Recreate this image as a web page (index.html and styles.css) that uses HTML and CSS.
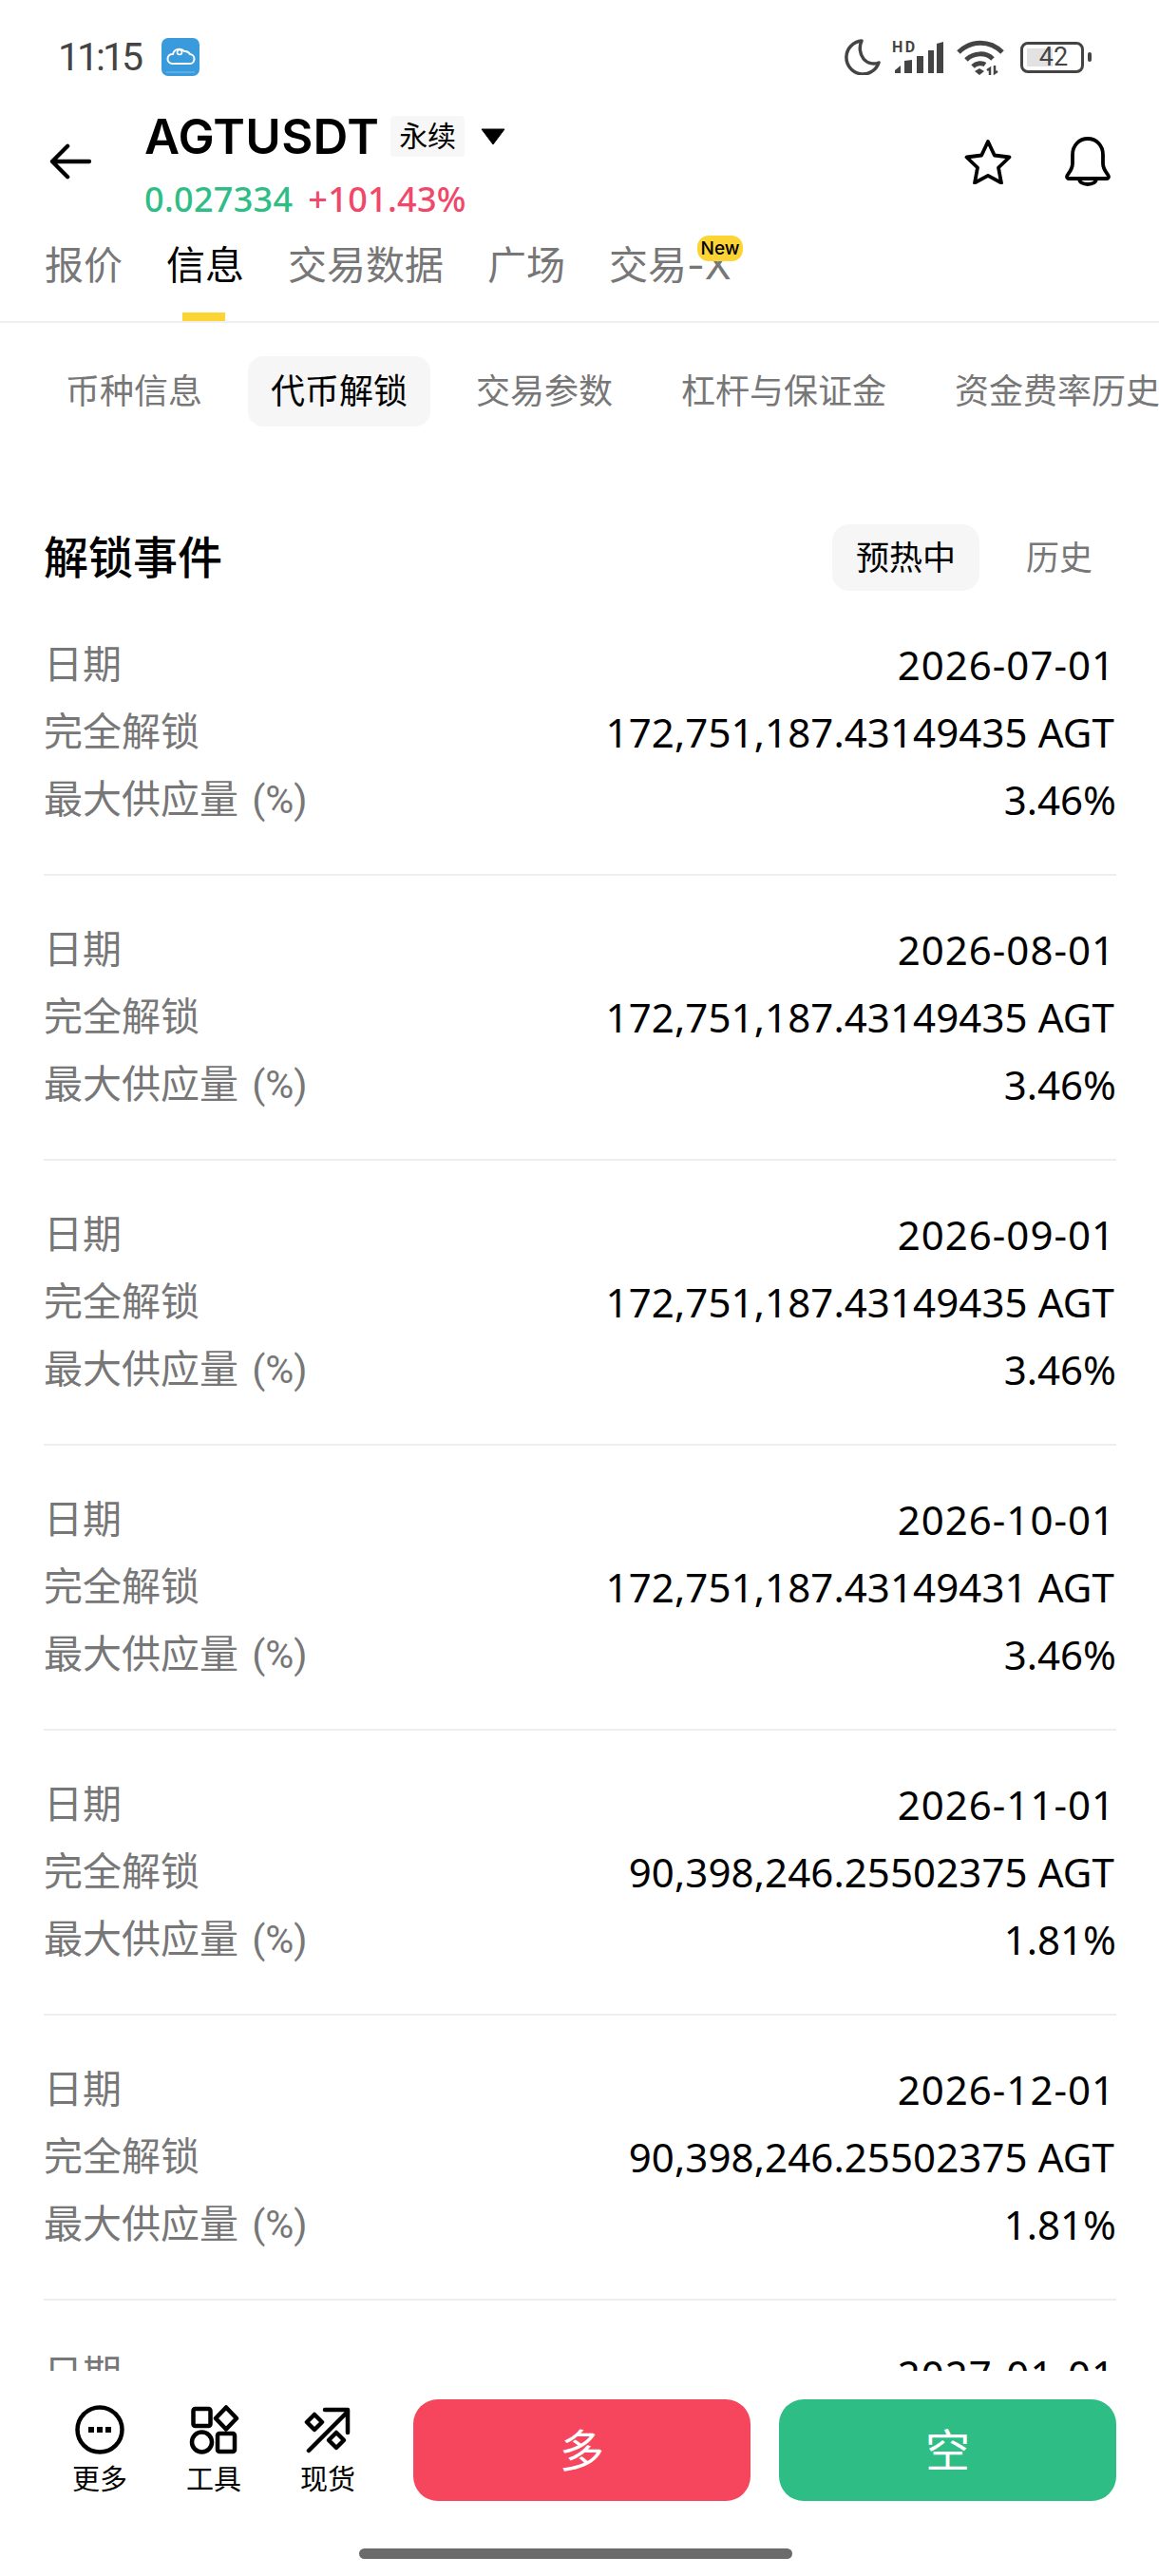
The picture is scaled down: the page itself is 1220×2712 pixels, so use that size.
FILE: index.html
```html
<!DOCTYPE html>
<html lang="zh">
<head>
<meta charset="utf-8">
<title>AGTUSDT</title>
<link rel="stylesheet" href="styles.css">
</head>
<body>
<div class="screen">
  <div class="status">
    <span class="time">11:15</span>
    <svg class="app" viewBox="0 0 40 40"><rect width="40" height="40" rx="7" fill="#3a9bdc"/><path d="M11 27h18a5 5 0 0 0 1-10 6 6 0 0 0-6-3 7 7 0 0 0-12 3 5 5 0 0 0-1 10z" fill="none" stroke="#fff" stroke-width="2"/><circle cx="19" cy="15" r="2.5" fill="none" stroke="#fff" stroke-width="1.6"/><path d="M5 36h30" stroke="#7cc0ec" stroke-width="1"/></svg>
    <div class="status-right">
      <svg class="moon" viewBox="0 0 38 38"><path d="M18 2A17.500 17.500 0 1 0 36 25C31 27 24 26 20 21 16 16 15 8 18 2Z" fill="none" stroke="#444" stroke-width="3.500" stroke-linejoin="round"/></svg>
      <svg class="signal" viewBox="0 0 56 38"><text x="0" y="14" class="hd">HD</text><path d="M3 36v-3l6-5v8zM13 36V23l8-1v14zM26 36V18h7v18zM38 36V12h6v24zM47 36V5l7-2v33z" fill="#444"/></svg>
      <svg class="wifi" viewBox="0 0 50 38"><g fill="none" stroke="#444" stroke-width="5"><path d="M2 14C15 1 35 1 48 14"/><path d="M10 22C18 14 31 14 38 21"/><path d="M17 29C21 25 27 25 30 27"/></g><path d="M24 31l5 3-5 4-5-4z" fill="#444"/><path d="M35 38v-7l-3 2M40 28v8l3-2" fill="none" stroke="#444" stroke-width="2.500"/></svg>
      <div class="battery"><div class="battery-body"><span class="battery-fill"></span><span class="battery-num">42</span></div><span class="battery-nub"></span></div>
    </div>
  </div>

  <header class="header">
    <svg class="back" viewBox="0 0 46 40"><path d="M44 20H3M20 3 3 20l17 17" fill="none" stroke="#000" stroke-width="4.500" stroke-linecap="round" stroke-linejoin="round"/></svg>
    <div class="title-col">
      <div class="title-row">
        <span class="symbol">AGTUSDT</span>
        <span class="perp">永续</span>
        <svg class="caret" viewBox="0 0 26 18"><path d="M1 1h24L13 17z" fill="#000" stroke="#000" stroke-linejoin="round"/></svg>
      </div>
      <div class="price-row"><span class="price">0.027334</span><span class="change">+101.43%</span></div>
    </div>
    <div class="actions">
      <svg class="star" viewBox="0 0 50 48"><path d="M25 3l6.800 14.500 15.700 2-11.500 11 3 16L25 38.800 11 46.500l3-16-11.500-11 15.700-2z" fill="none" stroke="#000" stroke-width="3.800" stroke-linejoin="round"/></svg>
      <svg class="bell" viewBox="0 0 50 52"><path d="M3 42c0-3 6-6 6-14V19C9 9 16 2 25 2s16 7 16 17v9c0 8 6 11 6 14 0 1-1 2-2 2H5c-1 0-2-1-2-2zM16 44c0 4 4 6 9 6s9-2 9-6" fill="none" stroke="#000" stroke-width="3.800" stroke-linejoin="round"/></svg>
    </div>
  </header>

  <nav class="tabs">
    <span class="tab">报价</span>
    <span class="tab tab-on">信息</span>
    <span class="tab">交易数据</span>
    <span class="tab">广场</span>
    <span class="tab tab-new">交易-X<span class="badge">New</span></span>
  </nav>

  <div class="subtabs">
    <span class="sub">币种信息</span>
    <span class="sub sub-on">代币解锁</span>
    <span class="sub">交易参数</span>
    <span class="sub">杠杆与保证金</span>
    <span class="sub">资金费率历史</span>
  </div>

  <main class="content">
    <div class="section-head">
      <h2 class="section-title">解锁事件</h2>
      <div class="toggle"><span class="toggle-item toggle-on">预热中</span><span class="toggle-item">历史</span></div>
    </div>

    <section class="event">
      <div class="row"><span class="label">日期</span><span class="value date">2026-07-01</span></div>
      <div class="row"><span class="label">完全解锁</span><span class="value amount">172,751,187.43149435 AGT</span></div>
      <div class="row"><span class="label">最大供应量 (%)</span><span class="value">3.46%</span></div>
    </section>
    <section class="event">
      <div class="row"><span class="label">日期</span><span class="value date">2026-08-01</span></div>
      <div class="row"><span class="label">完全解锁</span><span class="value amount">172,751,187.43149435 AGT</span></div>
      <div class="row"><span class="label">最大供应量 (%)</span><span class="value">3.46%</span></div>
    </section>
    <section class="event">
      <div class="row"><span class="label">日期</span><span class="value date">2026-09-01</span></div>
      <div class="row"><span class="label">完全解锁</span><span class="value amount">172,751,187.43149435 AGT</span></div>
      <div class="row"><span class="label">最大供应量 (%)</span><span class="value">3.46%</span></div>
    </section>
    <section class="event">
      <div class="row"><span class="label">日期</span><span class="value date">2026-10-01</span></div>
      <div class="row"><span class="label">完全解锁</span><span class="value amount">172,751,187.43149431 AGT</span></div>
      <div class="row"><span class="label">最大供应量 (%)</span><span class="value">3.46%</span></div>
    </section>
    <section class="event">
      <div class="row"><span class="label">日期</span><span class="value date">2026-11-01</span></div>
      <div class="row"><span class="label">完全解锁</span><span class="value amount">90,398,246.25502375 AGT</span></div>
      <div class="row"><span class="label">最大供应量 (%)</span><span class="value">1.81%</span></div>
    </section>
    <section class="event">
      <div class="row"><span class="label">日期</span><span class="value date">2026-12-01</span></div>
      <div class="row"><span class="label">完全解锁</span><span class="value amount">90,398,246.25502375 AGT</span></div>
      <div class="row"><span class="label">最大供应量 (%)</span><span class="value">1.81%</span></div>
    </section>
    <section class="event">
      <div class="row"><span class="label">日期</span><span class="value date">2027-01-01</span></div>
    </section>
  </main>

  <footer class="footer">
    <div class="footer-row">
      <div class="tool">
        <svg class="tool-icon" viewBox="0 0 56 52"><circle cx="28" cy="26" r="23.500" fill="none" stroke="#000" stroke-width="4.500"/><path d="M16 23h6v6h-6zM25 23h6v6h-6zM34 23h6v6h-6z" fill="#000"/></svg>
        <span class="tool-label">更多</span>
      </div>
      <div class="tool">
        <svg class="tool-icon" viewBox="0 0 56 52"><g fill="none" stroke="#000" stroke-width="4.500" stroke-linejoin="round"><rect x="6.500" y="4" width="18" height="18" rx="2"/><path d="M41 2.500 52 14 41 25.500 30 14z"/><circle cx="15.500" cy="39" r="10.500"/><rect x="32" y="30" width="18" height="19" rx="2"/></g></svg>
        <span class="tool-label">工具</span>
      </div>
      <div class="tool">
        <svg class="tool-icon" viewBox="0 0 56 52"><g fill="none" stroke="#000" stroke-width="4.500" stroke-linecap="round" stroke-linejoin="round"><path d="M8 48 49 7M25 5h24v24"/><path d="M14 10l8 8-8 8-8-8z"/><path d="M37 29l8 8-8 8-8-8z"/></g></svg>
        <span class="tool-label">现货</span>
      </div>
      <div class="btn btn-long">多</div>
      <div class="btn btn-short">空</div>
    </div>
    <div class="home-bar"></div>
  </footer>
</div>
</body>
</html>
```
FILE: styles.css
```css
* { box-sizing: border-box; }
html, body { margin: 0; padding: 0; background: #fff; }
body { font-family: "Inter", "Noto Sans CJK SC", sans-serif; color: #000; }
.screen { width: 1220px; height: 2712px; display: flex; flex-direction: column; overflow: hidden; background: #fff; }

.status { height: 120px; flex: none; display: flex; align-items: center; padding: 0 71px 0 61px; }
.time { font-family: "Roboto", sans-serif; font-size: 41px; line-height: 40px; letter-spacing: -3px; color: #444; width: 109px; }
.app { width: 40px; height: 40px; }
.status-right { margin-left: auto; display: flex; align-items: center; }
.moon { width: 38px; height: 38px; }
.signal { width: 56px; height: 38px; margin-left: 12px; }
.hd { font-family: "Roboto", sans-serif; font-weight: 700; font-size: 16px; letter-spacing: 2.5px; fill: #444; }
.wifi { width: 50px; height: 38px; margin-left: 12px; }
.battery { display: flex; align-items: center; margin-left: 17px; }
.battery-body { position: relative; width: 67px; height: 33px; border: 3px solid #444; border-radius: 8px; display: flex; align-items: center; justify-content: center; }
.battery-fill { position: absolute; left: 4px; top: 4px; bottom: 4px; width: 27px; background: #e2e2e2; }
.battery-num { position: relative; font-family: "Roboto", sans-serif; font-size: 27px; line-height: 27px; color: #444; padding-left: 3px; }
.battery-nub { width: 4px; height: 10px; margin-left: 4px; background: #444; border-radius: 2px; }

.header { height: 120px; flex: none; display: flex; padding: 2px 50px 0 52px; }
.back { width: 44px; height: 38px; margin-top: 29px; flex: none; }
.title-col { margin-left: 56px; display: flex; flex-direction: column; }
.title-row { height: 43px; display: flex; align-items: center; }
.symbol { font-size: 51px; line-height: 43px; font-weight: 600; letter-spacing: 0.3px; }
.perp { margin-left: 12px; height: 43px; width: 78px; background: #f7f7f7; border-radius: 4px; font-size: 30px; line-height: 43px; text-align: center; }
.caret { width: 26px; height: 18px; margin-left: 17px; }
.price-row { margin-top: 25px; display: flex; align-items: center; font-family: "Noto Sans", sans-serif; font-weight: 500; font-size: 36px; letter-spacing: 0.3px; line-height: 40px; }
.price { color: #2ebd85; }
.change { color: #f0476a; margin-left: 16px; }
.actions { margin-left: auto; display: flex; align-items: flex-start; }
.star { width: 50px; height: 48px; margin-top: 24px; }
.bell { width: 50px; height: 52px; margin-top: 22px; margin-left: 55px; }

.tabs { height: 100px; flex: none; display: flex; gap: 46px; padding: 10px 0 0 47px; border-bottom: 2px solid #f0f0f0; }
.tab { position: relative; font-size: 41px; line-height: 58px; color: #777; height: 88px; }
.tab-on { color: #000; }
.tab-on::after { content: ""; position: absolute; left: 17px; bottom: 0; width: 45px; height: 9px; background: #fcd535; }
.badge { position: absolute; left: 93px; top: -2px; width: 48px; height: 27px; border-radius: 12px; background: #fcd535; color: #000; font-size: 19px; line-height: 27px; font-weight: 500; text-align: center; }

.subtabs { flex: none; margin-top: 35px; display: flex; gap: 24px; padding-left: 45px; white-space: nowrap; }
.sub { height: 74px; padding: 0 24px; border-radius: 16px; font-size: 36px; line-height: 74px; color: #777; flex: none; }
.sub-on { background: #f6f6f6; color: #000; }

.content { flex: 1; min-height: 0; overflow: hidden; padding: 0 45px 0 46px; }
.section-head { margin-top: 103px; height: 70px; display: flex; align-items: center; justify-content: space-between; }
.section-title { margin: 0; font-size: 47px; line-height: 70px; font-weight: 500; }
.toggle { display: flex; gap: 24px; }
.toggle-item { height: 70px; padding: 0 25px; border-radius: 18px; font-size: 35px; line-height: 70px; color: #777; }
.toggle-on { background: #f6f6f6; color: #000; }

.event { padding: 44px 0 41px; border-bottom: 2px solid #eee; }
.row { height: 71px; display: flex; align-items: center; justify-content: space-between; }
.label { font-family: "Roboto", "Noto Sans CJK SC", sans-serif; font-size: 41px; line-height: 50px; word-spacing: 4px; padding-bottom: 4px; color: #777; }
.value { font-family: "Noto Sans", sans-serif; font-size: 42px; line-height: 50px; padding-bottom: 3px; }
.date { letter-spacing: 1px; padding-right: 1px; }
.amount { letter-spacing: 0.1px; padding-right: 2px; }

.footer { flex: none; height: 216px; background: #fff; padding-top: 30px; }
.footer-row { display: flex; padding: 0 45px; align-items: flex-start; height: 107px; }
.tool { width: 120px; display: flex; flex-direction: column; align-items: center; flex: none; }
.tool-icon { width: 56px; height: 52px; margin-top: 6px; }
.tool-label { font-size: 29px; line-height: 40px; margin-top: 7px; }
.btn { width: 355px; height: 107px; border-radius: 26px; color: #fff; font-size: 47px; line-height: 107px; text-align: center; flex: none; }
.btn-long { background: #f6465d; margin-left: 30px; }
.btn-short { background: #2ebd85; margin-left: 30px; }
.home-bar { width: 456px; height: 11px; border-radius: 6px; background: #6b6b6b; margin: 50px 0 0 378px; }
```
